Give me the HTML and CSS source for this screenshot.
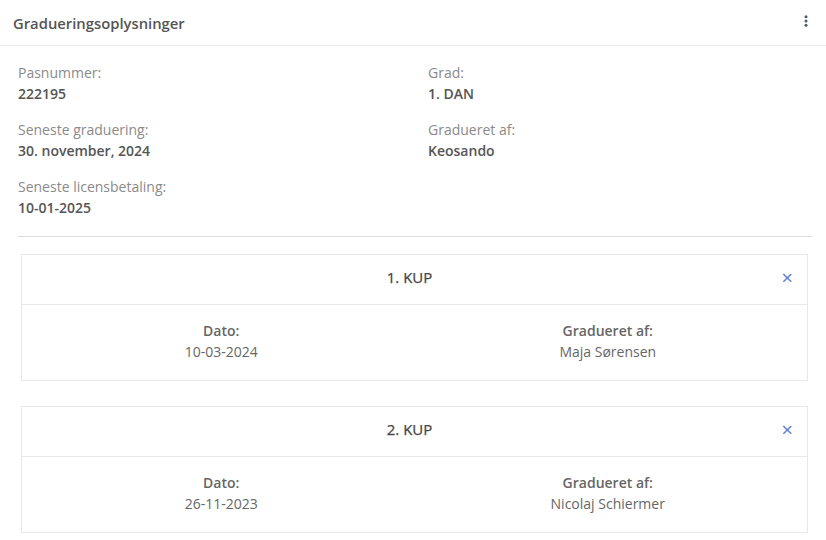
FILE: index.html
```html
<!DOCTYPE html>
<html lang="en">
<head>
  <meta charset="UTF-8">
  <meta name="viewport" content="width=device-width, initial-scale=1.0">
  <title>Gradueringsoplysninger</title>
  <link rel="stylesheet" href="styles.css">
</head>
<body>
  <div class="panel">
    <!-- Panel header -->
    <div class="panel-header">
      <h3>Gradueringsoplysninger</h3>
      <button class="menu-btn" aria-label="Menu">
        <svg width="4" height="12" viewBox="0 0 4 12"><circle cx="2" cy="1.7" r="1.5"/><circle cx="2" cy="6" r="1.5"/><circle cx="2" cy="10.3" r="1.5"/></svg>
      </button>
    </div>

    <div class="panel-body">
      <div class="info-grid">
        <div class="info-col">
          <div class="info-item">
            <span class="info-label">Pasnummer:</span>
            <span class="info-value">222195</span>
          </div>
          <div class="info-item">
            <span class="info-label">Seneste graduering:</span>
            <span class="info-value">30. november, 2024</span>
          </div>
          <div class="info-item">
            <span class="info-label">Seneste licensbetaling:</span>
            <span class="info-value">10-01-2025</span>
          </div>
        </div>
        <div class="info-col">
          <div class="info-item">
            <span class="info-label">Grad:</span>
            <span class="info-value">1. DAN</span>
          </div>
          <div class="info-item">
            <span class="info-label">Gradueret af:</span>
            <span class="info-value">Keosando</span>
          </div>
        </div>
      </div>

      <hr class="divider">

      <!-- Graduation history -->
      <div class="grade-card">
        <div class="grade-header">
          <span>1. KUP</span>
          <button class="close-btn" aria-label="Fjern">&times;</button>
        </div>
        <div class="grade-body">
          <div class="grade-field">
            <strong>Dato:</strong>
            <span>10-03-2024</span>
          </div>
          <div class="grade-field">
            <strong>Gradueret af:</strong>
            <span>Maja Sørensen</span>
          </div>
        </div>
      </div>

      <div class="grade-card">
        <div class="grade-header">
          <span>2. KUP</span>
          <button class="close-btn" aria-label="Fjern">&times;</button>
        </div>
        <div class="grade-body">
          <div class="grade-field">
            <strong>Dato:</strong>
            <span>26-11-2023</span>
          </div>
          <div class="grade-field">
            <strong>Gradueret af:</strong>
            <span>Nicolaj Schiermer</span>
          </div>
        </div>
      </div>
    </div>
  </div>
</body>
</html>
```

FILE: styles.css
```css
/* General Styles */
body {
  margin: 0;
  font-family: "Open Sans", Arial, sans-serif;
  background-color: #fff;
  color: #555;
  font-size: 14px;
}

.panel {
  width: 826px;
  background: #fff;
}

/* Header */
.panel-header {
  display: flex;
  justify-content: space-between;
  align-items: center;
  height: 45px;
  padding: 0 18px 0 13px;
  border-bottom: 1px solid #e9ecef;
}

.panel-header h3 {
  margin: 0;
  font-size: 14.8px;
  font-weight: 600;
  color: #555;
}

.menu-btn {
  border: none;
  background: none;
  padding: 0 0 4px;
  cursor: pointer;
  fill: #4f5a6e;
  display: flex;
}

/* Info grid */
.panel-body {
  padding: 16px 14px 0 18px;
}

.info-grid {
  display: grid;
  grid-template-columns: 410px 1fr;
}

.info-item {
  display: flex;
  flex-direction: column;
  margin-bottom: 15px;
  line-height: 21px;
}

.info-label {
  color: #8a8a8a;
}

.info-value {
  font-weight: 600;
  color: #555;
}

.divider {
  border: none;
  border-top: 1px solid #dcdcdc;
  margin: 3px 0 17px;
}

/* Grade cards */
.grade-card {
  margin: 0 4px 25px 3px;
  border: 1px solid #e6e8eb;
}

.grade-header {
  position: relative;
  height: 49px;
  padding-right: 10px;
  border-bottom: 1px solid #e6e8eb;
  text-align: center;
  line-height: 44px;
  font-size: 15px;
  font-weight: 500;
  color: #444;
  -webkit-text-stroke: 0.25px #444;
}

.close-btn {
  position: absolute;
  right: 14px;
  top: 13px;
  border: none;
  background: none;
  padding: 0;
  font-size: 20px;
  line-height: 20px;
  color: #5b7bd0;
  cursor: pointer;
  font-family: "Open Sans", Arial, sans-serif;
  -webkit-text-stroke: 0;
}

.grade-body {
  display: grid;
  grid-template-columns: 1fr 1fr;
  padding: 15px 6px 18px;
  text-align: center;
  line-height: 21px;
}

.grade-field {
  display: flex;
  flex-direction: column;
}

.grade-field strong {
  font-weight: 600;
  color: #666;
}

.grade-field span {
  color: #666;
}
```
